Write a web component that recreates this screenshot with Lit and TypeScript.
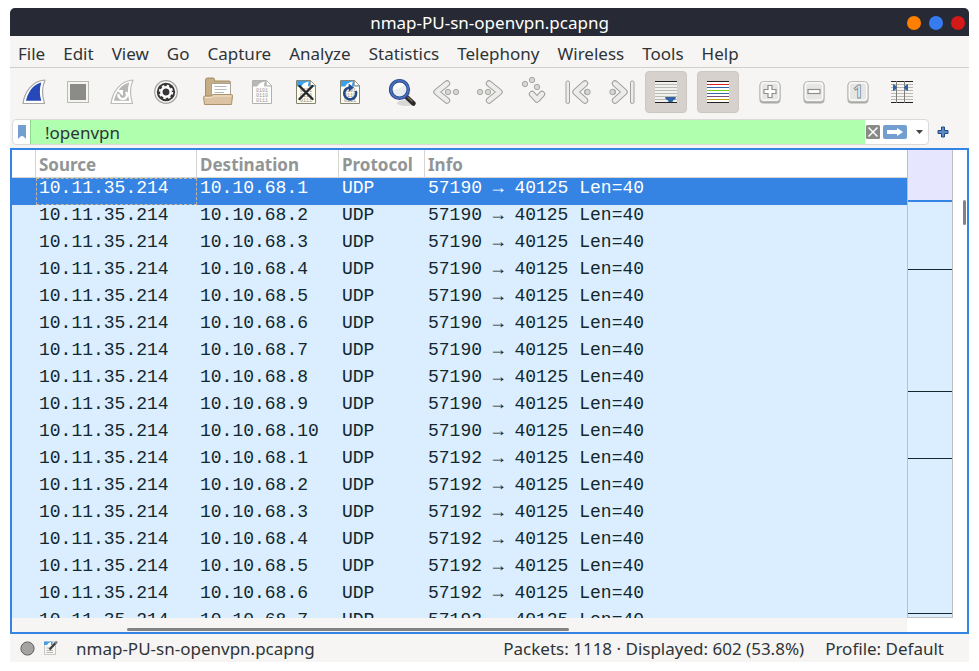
import { LitElement, html, svg, css, nothing } from "lit";
import { customElement, property } from "lit/decorators.js";

const MENUS = ["File", "Edit", "View", "Go", "Capture", "Analyze", "Statistics", "Telephony", "Wireless", "Tools", "Help"];

interface Tool {
  icon: string;
  label: string;
  pressed?: boolean;
}

const TOOLS: Tool[][] = [
  [
    { icon: "start", label: "Start capturing packets" },
    { icon: "stop", label: "Stop capturing packets" },
    { icon: "restart", label: "Restart current capture" },
    { icon: "options", label: "Capture options" },
  ],
  [
    { icon: "open", label: "Open a capture file" },
    { icon: "save", label: "Save this capture file" },
    { icon: "close", label: "Close this capture file" },
    { icon: "reload", label: "Reload this file" },
  ],
  [
    { icon: "find", label: "Find a packet" },
    { icon: "back", label: "Go back in packet history" },
    { icon: "forward", label: "Go forward in packet history" },
    { icon: "jump", label: "Go to specified packet" },
    { icon: "first", label: "Go to the first packet" },
    { icon: "last", label: "Go to the last packet" },
    { icon: "autoscroll", label: "Scroll during live capture", pressed: true },
  ],
  [{ icon: "colorize", label: "Draw packets using coloring rules", pressed: true }],
  [
    { icon: "zoomin", label: "Enlarge text" },
    { icon: "zoomout", label: "Shrink text" },
    { icon: "zoomreset", label: "Normal text size" },
    { icon: "resize", label: "Resize columns" },
  ],
];

const packet = (port: number, host: number) => ({
  source: "10.11.35.214",
  destination: `10.10.68.${host}`,
  protocol: "UDP",
  info: `${port} → 40125 Len=40`,
});

const PACKETS = [
  ...Array.from({ length: 10 }, (_, i) => packet(57190, i + 1)),
  ...Array.from({ length: 7 }, (_, i) => packet(57192, i + 1)),
];

const fin = (edge: string, fill: string) => svg`
  <path d="M-11 11.5C-9.500 0-2 -11 11 -12C7.500 -4 8 4 10.500 11.500Z" fill="#fff" stroke=${edge} stroke-width="1.200" stroke-linejoin="round"/>
  <path d="M-8 8.700C-6 0-1 -7.500 7.300 -9.500C5.300 -3 5.500 3 7.300 8.700Z" fill=${fill}/>`;

const sheet = (edge: string, paper: string, band: string, digits: string) => svg`
  <path d="M-9.500 -11.500H4.500L9.500 -6.500V11.500H-9.500Z" fill=${paper} stroke=${edge}/>
  <path d="M-9 -11H4.300V-6H9L9 -5.500H-9Z" fill=${band}/>
  <path d="M-5 -5C-4 -8-1 -10 3 -10.500C1.500 -8 2 -6.500 2.500 -5Z" fill="#fff"/>
  <path d="M4.500 -11.500V-6.500H9.500Z" fill="#fff" stroke=${edge} stroke-width=".7"/>
  <g fill=${digits} font-family="Liberation Mono, monospace" font-size="5">
    <text x="-6" y="0">0101</text><text x="-6" y="5">0110</text><text x="-6" y="10">0111</text>
  </g>`;

const chevron = (d: string) => svg`
  <g fill="none" stroke-linejoin="round" stroke-linecap="round">
    <path d=${d} stroke="#a0a09d" stroke-width="6.400"/>
    <path d=${d} stroke="#ececea" stroke-width="4.400"/>
  </g>`;

const dot = (x: number, y: number) =>
  svg`<circle cx=${x} cy=${y} r="2.700" fill="#d6d6d4" stroke="#a6a6a3"/>`;

const backward = svg`${dot(2, 0)}${dot(10, 0)}${chevron("M1 -8.500L-9.500 0L1 8.500")}`;
const toFirst = svg`
  ${dot(9, 0)}
  <rect x="-12" y="-11" width="3.500" height="22.500" rx="1.500" fill="#ececea" stroke="#a0a09d"/>
  ${chevron("M7 -8.500L-2.500 0L7 8.500")}
  ${dot(9.5, 0)}`;

const lines = (colors: string[]) =>
  colors.map((c, i) => svg`<rect x="-11" y=${-11 + i * 3} width="22" height="1" fill=${c}/>`);
const GREY = "#b9b9b3";
const PLAIN = ["#222", GREY, GREY, GREY, GREY, GREY, GREY, "#222"];

const key = svg`
  <rect x="-10.500" y="-10" width="21" height="21.500" rx="4" fill="#a9a9a6"/>
  <rect x="-10" y="-10.500" width="20" height="20" rx="3.500" fill="#f3f3f2" stroke="#b9b9b6"/>
  <rect x="-8.500" y="-9" width="17" height="17" rx="2.500" fill="#e6e6e4" stroke="#fbfbfa"/>`;

const ICONS: Record<string, unknown> = {
  start: fin("#a5a5a3", "#2748b8"),
  stop: svg`<rect x="-10.500" y="-10.500" width="21" height="21" fill="#f4f4f2" stroke="#b9b9b6"/>
    <rect x="-8" y="-8" width="16" height="16" fill="#8b8b88"/>`,
  restart: svg`${fin("#bcbcb9", "#b7b7b4")}
    <path d="M-3.500 2A4.300 4.300 0 1 0 4 0" fill="none" stroke="#fff" stroke-width="2.400"/>
    <path d="M-5.500 -2H1V4Z" fill="#fff"/>`,
  options: svg`<circle r="11.300" fill="#f7f7f6" stroke="#a2a2a0" stroke-width="1.200"/>
    <circle r="9.200" fill="#3a3636"/>
    <circle r="4.700" fill="none" stroke="#fff" stroke-width="2.400"/>
    <circle r="6.300" fill="none" stroke="#fff" stroke-width="1.800" stroke-dasharray="2.470 2.478"/>
    <circle r="3" fill="#3a3636"/>`,
  open: svg`<path d="M-12.500 8V-12Q-12.500 -14-10.500 -14H-5Q-3.500 -14-3.500 -12.500V-11H11Q12.500 -11 12.500 -9.500V8Z" fill="#c5ad85" stroke="#a58c63"/>
    <rect x="-6.500" y="-8.500" width="19" height="14" fill="#fff" stroke="#aaa59a"/>
    <path d="M-3.500 -5.500H8.500M-3.500 -2.500H8.500M-3.500 .5H6" stroke="#b8b8b4"/>
    <path d="M-14.500 5.500Q-14.500 4-13 4H-7L-5 2.500H13.500Q14.500 2.500 14.500 4L13.500 12.500H-13.500Z" fill="#dcc4a2" stroke="#ac916a"/>
    <path d="M-13 5.500H-6.500L-4.500 4H13" fill="none" stroke="#f2e4cd"/>`,
  save: sheet("#b1b1ae", "#fcfcfb", "#b8b8b5", "#999"),
  close: svg`${sheet("#858576", "#fdfced", "#3da0e8", "#8d8d85")}
    <path d="M-6.500 -6L6.500 7M6.500 -6L-6.500 7" stroke="#24282a" stroke-width="2.400" stroke-linecap="round"/>`,
  reload: svg`${sheet("#858576", "#fdfced", "#3da0e8", "#8d8d85")}
    <path d="M5.700 -1A6 6 0 1 1 -1 -4.500" fill="none" stroke="#234a8c" stroke-width="2.600"/>
    <path d="M-1.500 -8.500L4 -4.500L-1 -.5Z" fill="#234a8c"/>`,
  find: svg`<ellipse cx="4" cy="11" rx="9" ry="3" fill="#000" opacity=".12"/>
    <path d="M4.500 5L11.500 11.500" stroke="#2e2a28" stroke-width="4.600" stroke-linecap="round"/>
    <path d="M5.500 5L10.500 9.500" stroke="#7b746d" stroke-width="1.200"/>
    <circle cx="-2.500" cy="-2.500" r="8.800" fill="#e9ecef" stroke="#2b468c" stroke-width="3.600"/>
    <circle cx="-2.500" cy="-2.500" r="8.800" fill="none" stroke="#4a70c0" stroke-width="1.800"/>
    <path d="M-8.500 -2A6.500 6.500 0 0 1 2 -7.500Q-2 -3-8.500 -2Z" fill="#fff"/>`,
  back: backward,
  forward: svg`<g transform="scale(-1 1)">${backward}</g>`,
  jump: svg`${dot(-9, -8)}${dot(-2, -12)}${dot(3, -5)}${chevron("M-2 2L3 7.500L8 2")}`,
  first: toFirst,
  last: svg`<g transform="scale(-1 1)">${toFirst}</g>`,
  autoscroll: svg`<rect x="-11" y="-11" width="22" height="22" fill="#f1f1ef"/>${lines(PLAIN)}
    <path d="M-1 6Q-1 5 0 5H9Q10 5 10 6Q9 7.500 7 8.500L6.500 10H2.500L2 8.500Q0 7.500-1 6Z" fill="#2f62a6"/>`,
  colorize: svg`<rect x="-11" y="-11" width="22" height="22" fill="#fff"/>
    ${lines(["#222", "#e02020", "#3465a4", "#73d216", "#3465a4", "#75507b", "#c4a000", "#222"])}`,
  zoomin: svg`${key}<path d="M-2 -6.500H2V-2.500H6V1.500H2V5.500H-2V1.500H-6V-2.500H-2Z" fill="#fff" stroke="#8f8f8c" stroke-width="1.200"/>`,
  zoomout: svg`${key}<rect x="-6" y="-2.500" width="12" height="4" fill="#fff" stroke="#8f8f8c" stroke-width="1.200"/>`,
  zoomreset: svg`${key}<text y="5.500" text-anchor="middle" font-family="Noto Sans, sans-serif" font-weight="700" font-size="17" fill="#fff" stroke="#8f8f8c">1</text>`,
  resize: svg`${lines(PLAIN)}
    <path d="M-5.500 -11V11M2.500 -11V11" stroke="#7f7f78"/>
    <path d="M-9 -8Q-6 -7-5 -4.500Q-6 -2-9 -1ZM6 -8Q3 -7 2 -4.500Q3 -2 6 -1Z" fill="#2f62a6"/>`,
};

@customElement("tool-button")
export class ToolButton extends LitElement {
  @property() icon = "";
  @property() label = "";
  @property({ type: Boolean }) pressed = false;

  static styles = css`
    :host { display: block; }
    .tool {
      display: grid;
      place-items: center;
      box-sizing: border-box;
      width: 42px;
      height: 42px;
      padding: 0;
      border: 1px solid transparent;
      border-radius: 4px;
      background: none;
    }
    .tool[aria-pressed="true"] { background: #d6d1cd; border-color: #cdc7c2; }
    .glyph { display: block; width: 30px; height: 30px; overflow: visible; }
  `;

  render() {
    return html`<button class="tool" aria-label=${this.label} aria-pressed=${this.pressed ? "true" : nothing}>
      <svg class="glyph" viewBox="-15 -15 30 30">${ICONS[this.icon]}</svg>
    </button>`;
  }
}

@customElement("packet-list")
export class PacketList extends LitElement {
  static styles = css`
    :host {
      display: flex;
      flex: 1;
      min-height: 0;
      border: 2px solid #3584e4;
      background: #fff;
    }
    .main { flex: 1; min-width: 0; display: flex; flex-direction: column; }
    .rows { flex: 1; min-height: 0; overflow: hidden; background: #daeeff; }
    .packets { width: 100%; table-layout: fixed; border-collapse: separate; border-spacing: 0; }
    .num { width: 24px; }
    .src { width: 161px; }
    .dst { width: 142px; }
    .proto { width: 86px; }
    .head {
      box-sizing: border-box;
      height: 28px;
      padding: 2px 0 0 3px;
      border-right: 1px solid #d5d5d3;
      border-bottom: 1px solid #d5d5d3;
      background: #fff;
      color: #929595;
      font: 700 17px/24px "Noto Sans", sans-serif;
      text-align: left;
      white-space: nowrap;
    }
    .head:last-child { border-right: 0; }
    .cell {
      box-sizing: border-box;
      height: 27px;
      padding: 0 0 0 3px;
      vertical-align: top;
      color: #12272e;
      font: 18px/21px "Liberation Mono", monospace;
      white-space: pre;
    }
    .selected .cell { background: #3584e4; color: #fff; }
    .selected .focus { outline: 1px dashed #c9b79a; outline-offset: -1px; }
    .hscroll {
      display: grid;
      grid-template-columns: 115fr 442fr 338fr;
      align-items: end;
      box-sizing: border-box;
      height: 14px;
      padding-bottom: 1px;
      background: #f6f5f4;
    }
    .hthumb { grid-column: 2; height: 3px; border-radius: 2px; background: #808284; }
    .overview {
      display: flex;
      flex-direction: column;
      box-sizing: border-box;
      width: 46px;
      margin-bottom: 14px;
      border: 1px solid #c0c0be;
      border-top: 0;
      background: #daeeff;
    }
    .band { height: 50px; background: #e6e6ff; border-bottom: 2px solid #3584e4; }
    .mark { border-bottom: 1px solid #12272e; }
    .m1 { flex: 67; }
    .m2 { flex: 121; }
    .m3 { flex: 66; }
    .m4 { flex: 154; }
    .rest { flex: 3; }
    .vscroll { width: 14px; box-sizing: border-box; padding: 50px 1px 0 10px; }
    .vthumb { height: 25px; border-radius: 2px; background: #808284; }
  `;

  render() {
    return html`
      <div class="main">
        <div class="rows">
          <table class="packets">
            <thead>
              <tr>
                <th class="head num"></th>
                <th class="head src">Source</th>
                <th class="head dst">Destination</th>
                <th class="head proto">Protocol</th>
                <th class="head">Info</th>
              </tr>
            </thead>
            <tbody>
              ${PACKETS.map(
                (p, i) => html`<tr class=${i === 0 ? "selected" : ""}>
                  <td class="cell"></td>
                  <td class="cell focus">${p.source}</td>
                  <td class="cell">${p.destination}</td>
                  <td class="cell">${p.protocol}</td>
                  <td class="cell">${p.info}</td>
                </tr>`
              )}
            </tbody>
          </table>
        </div>
        <div class="hscroll"><div class="hthumb"></div></div>
      </div>
      <div class="overview">
        <div class="band"></div>
        <div class="mark m1"></div>
        <div class="mark m2"></div>
        <div class="mark m3"></div>
        <div class="mark m4"></div>
        <div class="rest"></div>
      </div>
      <div class="vscroll"><div class="vthumb"></div></div>
    `;
  }
}

@customElement("app-root")
export class AppRoot extends LitElement {
  static styles = css`
    :host {
      display: flex;
      box-sizing: border-box;
      height: 100vh;
      padding: 8px 10px 9px;
      background: #fff;
      color: #2e3436;
      font: 17px/24px "Noto Sans", sans-serif;
    }
    .window { flex: 1; min-width: 0; display: flex; flex-direction: column; background: #f6f5f4; border-radius: 5px 5px 0 0; }
    .title {
      display: grid;
      grid-template-columns: 1fr auto 1fr;
      align-items: center;
      box-sizing: border-box;
      height: 28px;
      padding-top: 1px;
      border-radius: 5px 5px 0 0;
      background: #272a34;
      color: #fff;
    }
    .name { grid-column: 2; margin: 0; font: inherit; }
    .controls { display: flex; justify-content: flex-end; gap: 8px; padding-right: 4px; }
    .control { width: 14px; height: 14px; padding: 0; border: 0; border-radius: 50%; }
    .minimize { background: #ff7f00; }
    .maximize { background: #367bf0; }
    .quit { background: #d41919; }
    .menu { display: flex; gap: 18px; height: 32px; padding: 4px 8px 0; box-sizing: border-box; border-bottom: 1px solid #cfcfcc; }
    .item { padding: 0; border: 0; background: none; color: inherit; font: inherit; }
    .tools { display: flex; gap: 10px; padding: 3px 3px 6px; }
    .group { display: flex; gap: 2px; }
    .filterbar { display: flex; align-items: center; gap: 8px; padding: 0 20px 3px 2px; }
    .filter { flex: 1; display: flex; align-items: center; box-sizing: border-box; height: 26px; border: 1px solid #dcdad8; border-radius: 4px; background: #fff; overflow: hidden; }
    .plain { display: grid; place-items: center; padding: 0; border: 0; background: none; }
    .bookmark { width: 17px; height: 24px; }
    .query {
      flex: 1;
      min-width: 0;
      height: 24px;
      box-sizing: border-box;
      padding: 2px 0 0 14px;
      border: 0;
      border-left: 1px solid #8fd68f;
      outline: 0;
      background: #afffaf;
      color: inherit;
      font: inherit;
    }
    .actions { display: flex; align-items: center; gap: 3px; padding-left: 1px; }
    .more { width: 18px; height: 20px; }
    .art { display: block; }
    .status { display: flex; align-items: center; height: 28px; padding: 0 25px 0 10px; }
    .file { flex: 1; padding-left: 17px; }
    .label { padding-top: 2px; }
    .counts { padding-right: 21px; }
    .expert { margin-right: 8px; }
  `;

  render() {
    return html`
      <main class="window">
        <header class="title">
          <h1 class="name">nmap-PU-sn-openvpn.pcapng</h1>
          <div class="controls">
            <button class="control minimize" aria-label="Minimize"></button>
            <button class="control maximize" aria-label="Maximize"></button>
            <button class="control quit" aria-label="Close"></button>
          </div>
        </header>
        <nav class="menu">${MENUS.map((m) => html`<button class="item">${m}</button>`)}</nav>
        <div class="tools" role="toolbar">
          ${TOOLS.map(
            (g) => html`<div class="group">
              ${g.map((t) => html`<tool-button .icon=${t.icon} .label=${t.label} .pressed=${!!t.pressed}></tool-button>`)}
            </div>`
          )}
        </div>
        <div class="filterbar">
          <div class="filter">
            <button class="plain bookmark" aria-label="Filter bookmarks">
              <svg class="art" width="8" height="14"><path d="M0 0H8V14L6 12Q4 10 2 12L0 14Z" fill="#729fcf"/></svg>
            </button>
            <input class="query" aria-label="Display filter" .value=${"!openvpn"} spellcheck="false" />
            <div class="actions">
              <button class="plain" aria-label="Clear filter">
                <svg class="art" width="14" height="14"><rect width="14" height="14" rx="1.500" fill="#888a85"/><path d="M2.500 2.500L11.500 11.500M11.500 2.500L2.500 11.500" stroke="#fff" stroke-width="1.500"/></svg>
              </button>
              <button class="plain" aria-label="Apply filter">
                <svg class="art" width="24" height="14"><rect width="24" height="14" rx="2" fill="#729fcf"/><path d="M4 5H14V3L20 7L14 11V9H4Z" fill="#fff"/></svg>
              </button>
              <button class="plain more" aria-label="Recent filters">
                <svg class="art" width="7" height="4"><path d="M0 0H7L3.500 4Z" fill="#3f4446"/></svg>
              </button>
            </div>
          </div>
          <button class="plain" aria-label="Add filter button">
            <svg class="art" width="12" height="12"><path d="M4.500 1H7.500V4.500H11V7.500H7.500V11H4.500V7.500H1V4.500H4.500Z" fill="#5b8ac4" stroke="#204a87" stroke-linejoin="round"/></svg>
          </button>
        </div>
        <packet-list></packet-list>
        <footer class="status">
          <button class="plain expert" aria-label="Expert information">
            <svg class="art" width="15" height="15"><circle cx="7.500" cy="7.500" r="6.600" fill="#a3a3a1" stroke="#60605e"/></svg>
          </button>
          <button class="plain" aria-label="Capture file comments">
            <svg class="art" width="16" height="16">
              <rect x="1.500" y="2" width="11" height="12.500" fill="#f7f7f4" stroke="#c8c8c4"/>
              <path d="M1 1.500H9.500V5H1Z" fill="#4a9be0"/><path d="M4 5Q5 2.500 8 2V5Z" fill="#fff"/>
              <path d="M3.500 8H8M3.500 10.500H10M3.500 12.500H10" stroke="#b5b5b1"/>
              <path d="M6.500 9.500L13 2.500" stroke="#3b3f40" stroke-width="2.400"/><path d="M12 3.500L14 1.500" stroke="#7d8284" stroke-width="2.400"/>
            </svg>
          </button>
          <span class="label file">nmap-PU-sn-openvpn.pcapng</span>
          <span class="label counts">Packets: 1118 · Displayed: 602 (53.8%)</span>
          <span class="label">Profile: Default</span>
        </footer>
      </main>
    `;
  }
}
